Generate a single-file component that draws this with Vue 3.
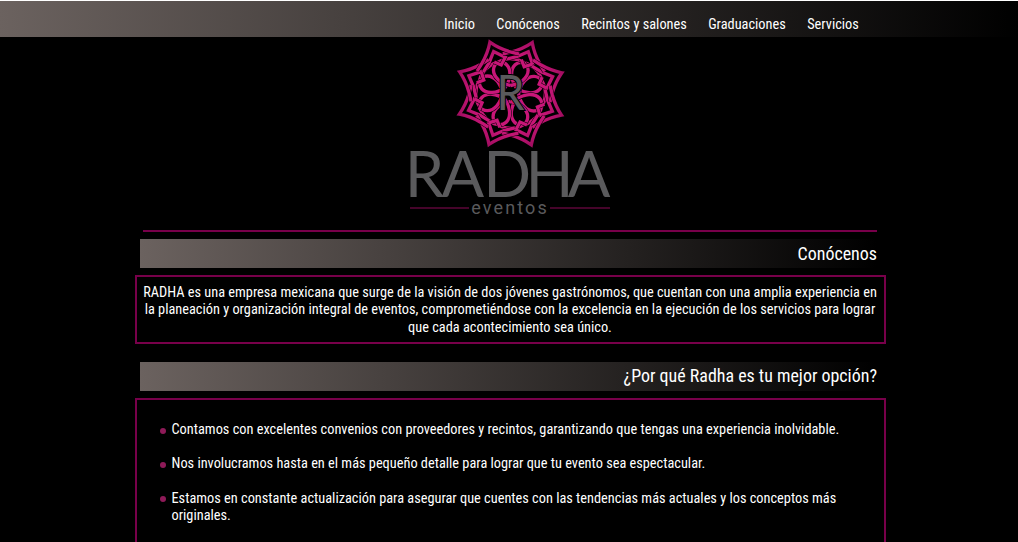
<script setup>
const links = ['Inicio', 'Conócenos', 'Recintos y salones', 'Graduaciones', 'Servicios']
const reasons = [
  ['Contamos con excelentes convenios con proveedores y recintos, garantizando que tengas una experiencia inolvidable.'],
  ['Nos involucramos hasta en el más pequeño detalle para lograr que tu evento sea espectacular.'],
  ['Estamos en constante actualización para asegurar que cuentes con las tendencias más actuales y los conceptos más', 'originales.'],
]
const turns = [0, 1, 2, 3, 4, 5, 6, 7].map((n) => n * 45 + 23)
const petal = 'M0-24C-30-30-52-48-52-70C-52-90-30-104 0-104C30-104 52-90 52-70C52-48 30-30 0-24'
const hook = 'M-52-90L-25-110L0-136L26-107L6-90L-10-106'
const star = 'M-68-100L-46-116Q-18-138 0-166Q18-138 46-116L68-100'
const strands = [
  { d: petal, offset: 22.5 },
  { d: hook, offset: 0 },
  { d: star, offset: 0 },
]
</script>

<template>
  <div class="page">
    <nav class="nav">
      <a v-for="l in links" :key="l">{{ l }}</a>
    </nav>
    <header class="brand">
      <svg class="logo" viewBox="0 0 210 184" width="210" height="184">
        <defs>
          <radialGradient id="pink" gradientUnits="userSpaceOnUse" cx="0" cy="0" r="172">
            <stop offset="0" stop-color="#c8167a" />
            <stop offset=".65" stop-color="#c81677" />
            <stop offset="1" stop-color="#a00d60" />
          </radialGradient>
        </defs>
        <g transform="translate(106.6 56.5) scale(.3333)" fill="none">
          <g v-for="s in strands" :key="s.d">
            <g v-for="t in turns" :key="t" :transform="`rotate(${t + s.offset})`">
              <path :d="s.d" stroke="#000" stroke-width="13" />
              <path :d="s.d" stroke="url(#pink)" stroke-width="10" />
            </g>
          </g>
        </g>
        <text class="mono" x="92.6" y="73" textLength="28" lengthAdjust="spacingAndGlyphs">R</text>
        <text class="name" x="0.7 37.6 79.2 121.6 163.8" y="160">RADHA</text>
        <text class="sub" x="67.2" y="177" textLength="75.5" lengthAdjust="spacing">eventos</text>
        <path d="M6 171H65M146 171H206" stroke="#5c0639" stroke-width="1.4" />
      </svg>
    </header>
    <hr class="rule" />
    <h2 class="title">Conócenos</h2>
    <section class="box intro">
      <p>RADHA es una empresa mexicana que surge de la visión de dos jóvenes gastrónomos, que cuentan con una amplia experiencia en</p>
      <p>la planeación y organización integral de eventos, comprometiéndose con la excelencia en la ejecución de los servicios para lograr</p>
      <p>que cada acontecimiento sea único.</p>
    </section>
    <h2 class="title second">¿Por qué Radha es tu mejor opción?</h2>
    <section class="box reasons">
      <ul>
        <li v-for="r in reasons" :key="r[0]"><p v-for="s in r" :key="s">{{ s }}</p></li>
      </ul>
    </section>
  </div>
</template>

<style scoped>
.page { height: 542px; overflow: hidden; background: #000; color: #fff; border-top: 1px solid #fff; box-sizing: border-box; font: 14.33px/17.3px "Roboto Condensed", Roboto, sans-serif; font-stretch: 75%; }
.nav { height: 36px; display: flex; gap: 21.4px; padding-left: 444px; box-sizing: border-box; align-items: center; padding-top: 12px; background: linear-gradient(to right, #6b625f, #000); }
.brand { height: 193px; display: flex; justify-content: center; }
.logo { overflow: visible; }
.mono, .name, .sub { font-family: Lato, sans-serif; font-stretch: normal; fill: #5a5a5c; }
.mono { font-size: 48px; font-weight: 400; stroke: #000; stroke-width: 2px; paint-order: stroke; }
.name { font-size: 63px; font-weight: 400; }
.sub { font-family: Roboto, sans-serif; font-size: 18px; font-weight: 400; }
.rule { margin: 0 141px 0 143px; border: 0; height: 2px; background: #78004a; }
.title { margin: 7px 141px 0 140px; height: 29px; font-size: 17.95px; font-weight: 400; text-align: right; line-height: 29px; background: linear-gradient(to right, #6b625f, #000); }
.box { margin: 7px 132px 0 135px; border: 2px solid #78004a; box-sizing: border-box; }
.intro { height: 69px; text-align: center; padding: 7px 1px 0 0; }
.title.second { margin-top: 18px; line-height: 28px; }
p { margin: 0; white-space: nowrap; }
.reasons { height: 200px; }
ul { list-style: none; margin: 21px 0 0 34.5px; padding: 0; }
li { position: relative; margin-bottom: 17px; }
li::before { content: ""; position: absolute; left: -11.5px; top: 6.5px; width: 6px; height: 6px; border-radius: 50%; background: #8e1a58; }
</style>
<style>
body { background: #000; }
</style>
